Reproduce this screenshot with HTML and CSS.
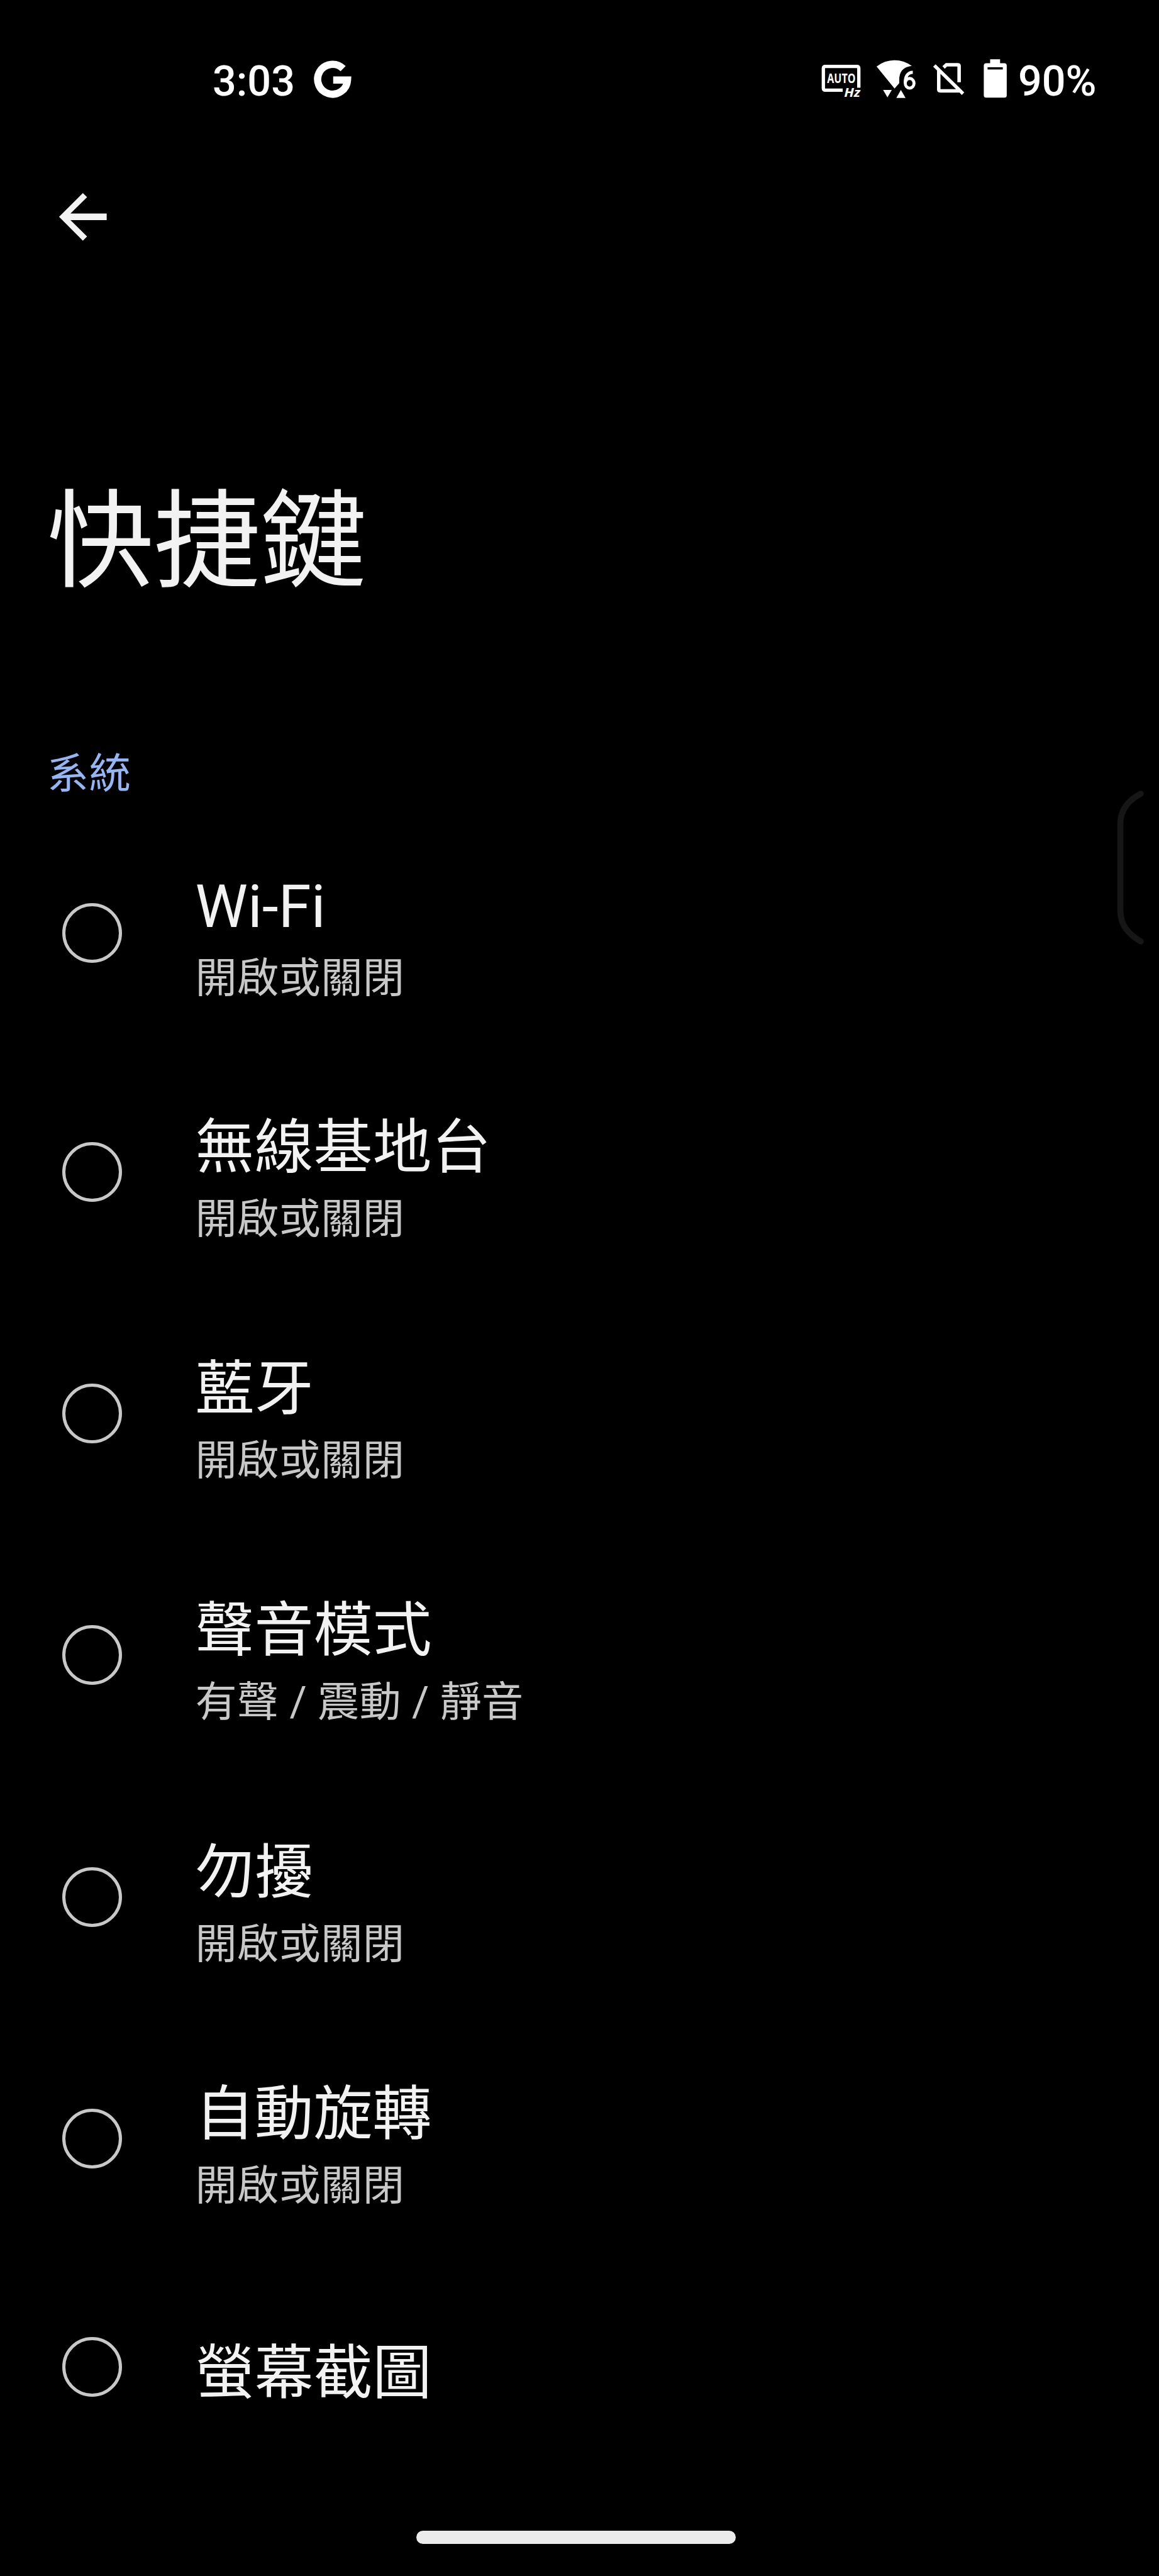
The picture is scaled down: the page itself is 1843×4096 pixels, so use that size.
FILE: index.html
```html
<!DOCTYPE html>
<html lang="zh-Hant">
<head>
    <meta charset="UTF-8">
    <meta name="viewport" content="width=device-width, initial-scale=1.0">
    <title>快捷鍵</title>
    <link rel="stylesheet" href="styles.css">
</head>
<body>

<div class="status-bar">
    <span class="clock">3:03</span>
    <svg class="icon-google" viewBox="740 40 290 300">
        <path d="M951 124A99 99 0 1 0 980 199H885" fill="none" stroke="#fff" stroke-width="48"/>
    </svg>
    <div class="status-icons">
        <svg class="icon-hz" viewBox="95 40 280 300">
            <path d="M245 267H130Q117 267 117 254V122Q117 109 130 109H339Q352 109 352 122V250" fill="none" stroke="#fff" stroke-width="22"/>
            <text x="142" y="219" font-size="86" font-weight="700" textLength="188" lengthAdjust="spacingAndGlyphs">AUTO</text>
            <text x="254" y="311" font-size="84" font-weight="700" font-style="italic" textLength="108" lengthAdjust="spacingAndGlyphs">Hz</text>
        </svg>
        <svg class="icon-wifi" viewBox="465 40 280 300">
            <path d="M473 110Q525 68 592 68Q655 68 706 106Q622 116 623 200V220L592 256Z" fill="#fff"/>
            <path d="M516 265H574L545 314ZM634 265L665 318H604Z" fill="#fff"/>
            <path d="M713 148C680 148 663 175 663 218" fill="none" stroke="#fff" stroke-width="21"/>
            <ellipse cx="692" cy="221" rx="29" ry="32" fill="none" stroke="#fff" stroke-width="20"/>
        </svg>
        <svg class="icon-sim" viewBox="830 40 230 300">
            <path d="M911 116L930 98H1005Q1014 98 1014 107V214M879 135V262Q879 271 888 271H1015M850 103L1040 290" fill="none" stroke="#fff" stroke-width="23"/>
        </svg>
        <svg class="icon-battery" viewBox="420 40 170 300">
            <path d="M472 62H538V88H566Q582 88 582 104V300Q582 316 566 316H446Q430 316 430 300V104Q430 88 446 88H472Z" fill="#fff"/>
            <path d="M455 122H556" stroke="#000" stroke-width="15"/>
        </svg>
        <span class="battery-level">90%</span>
    </div>
</div>

<div class="app-bar">
    <svg class="icon-back" viewBox="0 0 24 24">
        <path d="M20 10.9H7.83l5.59-5.49L12 4l-8 8 8 8 1.41-1.41L7.83 13.1H20z" fill="#f2f2f2"/>
    </svg>
</div>

<h1 class="page-title">快捷鍵</h1>
<h2 class="section-title">系統</h2>

<div class="list">
    <div class="row row-latin">
        <span class="radio"></span>
        <div class="row-text">
            <div class="row-title">Wi-Fi</div>
            <div class="row-summary">開啟或關閉</div>
        </div>
    </div>
    <div class="row">
        <span class="radio"></span>
        <div class="row-text">
            <div class="row-title">無線基地台</div>
            <div class="row-summary">開啟或關閉</div>
        </div>
    </div>
    <div class="row">
        <span class="radio"></span>
        <div class="row-text">
            <div class="row-title">藍牙</div>
            <div class="row-summary">開啟或關閉</div>
        </div>
    </div>
    <div class="row">
        <span class="radio"></span>
        <div class="row-text">
            <div class="row-title">聲音模式</div>
            <div class="row-summary">有聲 / 震動 / 靜音</div>
        </div>
    </div>
    <div class="row">
        <span class="radio"></span>
        <div class="row-text">
            <div class="row-title">勿擾</div>
            <div class="row-summary">開啟或關閉</div>
        </div>
    </div>
    <div class="row">
        <span class="radio"></span>
        <div class="row-text">
            <div class="row-title">自動旋轉</div>
            <div class="row-summary">開啟或關閉</div>
        </div>
    </div>
    <div class="row row-single">
        <span class="radio"></span>
        <div class="row-text">
            <div class="row-title">螢幕截圖</div>
        </div>
    </div>
</div>

<div class="nav-bar">
    <div class="nav-handle"></div>
</div>

<!-- edge panel handle -->
<svg class="edge-handle" viewBox="0 0 50 260">
    <path d="M40 9C20 20 7.500 34 7.500 58V194C7.500 218 20 232 40 244" fill="none" stroke="#161616" stroke-width="9.600" stroke-linecap="round"/>
</svg>

</body>
</html>
```

FILE: styles.css
```css
* {
    box-sizing: border-box;
}
body, html {
    margin: 0;
    padding: 0;
    height: 4096px;
    font-family: Roboto, "Noto Sans CJK TC", sans-serif;
    background-color: #000;
    color: #f2f2f2;
}
body {
    display: flex;
    flex-direction: column;
    position: relative;
    overflow: hidden;
}
svg {
    display: block;
    flex-shrink: 0;
    overflow: visible;
}
.status-bar {
    display: flex;
    align-items: center;
    height: 250px;
    padding: 0 99px 0 338px;
    color: #fff;
    font-size: 66.5px;
    font-weight: 500;
}
.clock, .battery-level {
    line-height: 80px;
    padding-top: 8px;
}
.clock {
    width: 157px;
}
.icon-google {
    width: 69.6px;
    height: 72px;
}
.status-icons {
    display: flex;
    align-items: center;
    margin-left: auto;
}
.status-icons text {
    fill: #fff;
    font-family: "Open Sans", sans-serif;
}
.icon-hz, .icon-wifi {
    width: 67.2px;
    height: 72px;
    margin-right: 21px;
}
.icon-sim {
    width: 55.2px;
    height: 72px;
    margin-right: 26.4px;
}
.icon-battery {
    width: 40.8px;
    height: 72px;
    margin-right: 16px;
}
.battery-level {
    width: 125px;
}
.app-bar {
    height: 190px;
    padding: 38px 75px;
}
.icon-back {
    width: 113.6px;
    height: 113.6px;
}
.page-title {
    margin: 322px 0 0 75px;
    font-size: 169.4px;
    font-weight: 400;
    line-height: 200px;
}
.section-title {
    margin: 219px 0 0 75px;
    font-size: 66.2px;
    font-weight: 400;
    line-height: 100px;
    letter-spacing: 0.6px;
    color: #94b6f2;
}
.list {
    margin-top: 14px;
}
.row {
    display: flex;
    align-items: center;
    height: 384.3px;
    padding-left: 98.5px;
}
.row-latin {
    height: 376px;
}
.row-single {
    height: 342px;
}
.radio {
    width: 95px;
    height: 95px;
    margin-right: 117px;
    border: 5px solid #c8c8c8;
    border-radius: 50%;
}
.row-text {
    padding-top: 21px;
}
.row-latin .row-text {
    padding-top: 15px;
}
.row-title {
    font-size: 94px;
    line-height: 130px;
}
.row-summary {
    font-size: 66.2px;
    line-height: 98px;
    letter-spacing: 0.4px;
    color: #c8c8c8;
}
.nav-bar {
    display: flex;
    justify-content: center;
    padding-right: 12px;
    margin-top: auto;
    margin-bottom: 51px;
}
.nav-handle {
    width: 508px;
    height: 21px;
    border-radius: 11px;
    background-color: #ebebeb;
}
.edge-handle {
    position: absolute;
    left: 1774px;
    top: 1253px;
    width: 50px;
    height: 260px;
}
```
